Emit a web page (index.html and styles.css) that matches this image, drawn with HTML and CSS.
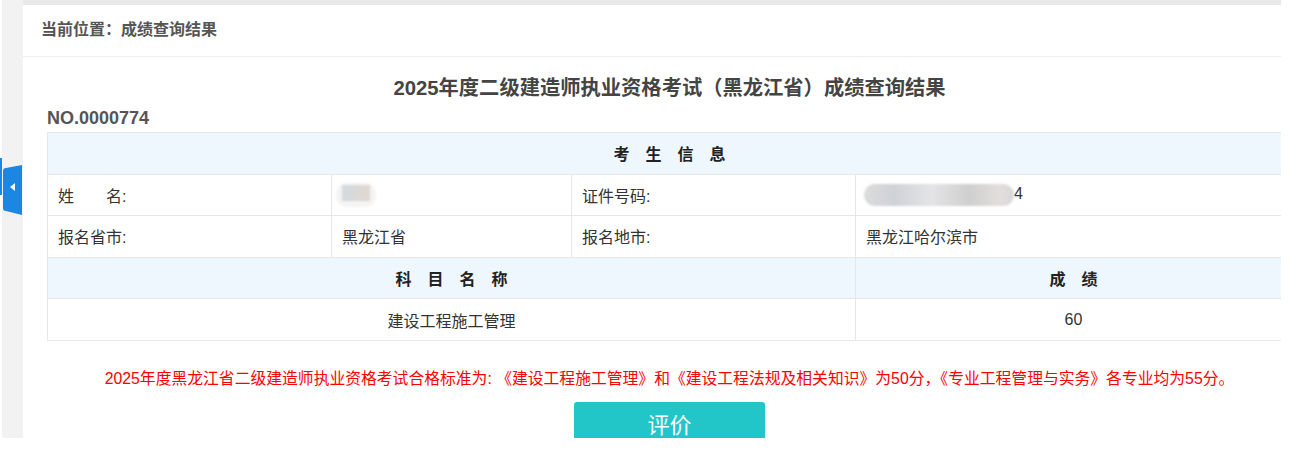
FILE: index.html
```html
<!DOCTYPE html>
<html lang="zh-CN">
<head>
    <meta charset="UTF-8">
    <title>成绩查询结果</title>
    <link rel="stylesheet" href="styles.css">
</head>
<body>
    <div class="frame">
        <div class="side">
            <span class="side-line"></span>
            <svg class="side-tab" width="19" height="50" viewBox="0 0 19 50">
                <path d="M0,6 Q0,3 3,3 L19,0 L19,50 L3,46 Q0,46 0,43 Z" fill="#1c86e3"/>
                <path d="M7,22 L12,18 L12,26 Z" fill="#ffffff"/>
            </svg>
        </div>
        <div class="main">
            <div class="crumb">当前位置：成绩查询结果</div>
            <div class="content">
                <h3 class="title">2025年度二级建造师执业资格考试（黑龙江省）成绩查询结果</h3>
                <div class="serial">NO.0000774</div>
                <table class="result">
                    <colgroup>
                        <col style="width: 284px">
                        <col style="width: 240px">
                        <col style="width: 284px">
                        <col>
                    </colgroup>
                    <tr class="head">
                        <td colspan="4"><span class="spaced">考生信息</span></td>
                    </tr>
                    <tr>
                        <td>姓<span class="gap"></span>名:</td>
                        <td><span class="blur blur-name"><i></i><i></i></span></td>
                        <td>证件号码:</td>
                        <td><span class="blur blur-id"></span>4</td>
                    </tr>
                    <tr>
                        <td>报名省市:</td>
                        <td>黑龙江省</td>
                        <td>报名地市:</td>
                        <td>黑龙江哈尔滨市</td>
                    </tr>
                    <tr class="head">
                        <td colspan="3"><span class="spaced">科目名称</span></td>
                        <td><span class="spaced">成绩</span></td>
                    </tr>
                    <tr class="center">
                        <td colspan="3">建设工程施工管理</td>
                        <td>60</td>
                    </tr>
                </table>
                <p class="note">2025年度黑龙江省二级建造师执业资格考试合格标准为: 《建设工程施工管理》和《建设工程法规及相关知识》为50分，《专业工程管理与实务》各专业均为55分。</p>
                <div class="actions">
                    <button class="btn">评价</button>
                </div>
            </div>
        </div>
    </div>
</body>
</html>
```
FILE: styles.css
```css
body {
    margin: 0;
    background-color: #ffffff;
    font-family: 'Liberation Sans', 'Noto Sans CJK SC', sans-serif;
    color: #333333;
}

.frame {
    display: flex;
    height: 438px;
    overflow: hidden;
}

.side {
    position: relative;
    width: 21px;
    margin-left: 2px;
    flex-shrink: 0;
    background-color: #f2f2f2;
}

.side-line {
    position: absolute;
    left: -2px;
    top: 158px;
    width: 2px;
    height: 37px;
    background-color: #1c86e3;
}

.side-tab {
    position: absolute;
    left: 1px;
    top: 165px;
}

.main {
    width: 1258px;
    flex-shrink: 0;
    overflow: hidden;
    border-top: 5px solid #e9e9e9;
    background-color: #ffffff;
}

.crumb {
    height: 51px;
    line-height: 50px;
    padding-left: 18px;
    font-size: 16px;
    font-weight: bold;
    color: #555555;
    border-bottom: 1px solid #eeeeee;
}

.content {
    width: 1245px;
    padding: 0 24px;
}

.title {
    margin: 16px 0 0;
    line-height: 30px;
    font-size: 20.3px;
    font-weight: bold;
    color: #444444;
    text-align: center;
}

.serial {
    margin-top: 5px;
    line-height: 20px;
    font-size: 18px;
    font-weight: bold;
    color: #555555;
}

.result {
    width: 1245px;
    margin-top: 4px;
    border-collapse: collapse;
    table-layout: fixed;
    font-size: 16px;
}

.result td {
    height: 40.6px;
    padding: 0 10px;
    border: 1px solid #e7e7e7;
    color: #333333;
}

.result .head td {
    background-color: #eef6fe;
    text-align: center;
    font-weight: bold;
    color: #222222;
}

.result .center td {
    text-align: center;
}

.spaced {
    letter-spacing: 16px;
    padding-left: 16px;
}

.gap {
    display: inline-block;
    width: 32px;
}

.blur {
    display: inline-block;
    vertical-align: middle;
    filter: blur(1px);
}

.blur-name {
    margin-left: -6px;
    padding: 2px 6px;
    border-radius: 10px;
    background-color: #f4f4f4;
}

.blur-name i {
    display: inline-block;
    width: 14px;
    height: 16px;
    background-color: #d6d9dc;
}

.blur-name i + i {
    background-color: #ddd8d4;
}

.blur-id {
    width: 150px;
    height: 22px;
    margin-left: -2px;
    border-radius: 11px;
    background: linear-gradient(90deg, #dcdcdc, #cfd2d6 20%, #e4e4e6 45%, #cfcfcf 70%, #e2dedc 90%, #d8d8d8);
}

.note {
    margin: 26px 0 0;
    line-height: 24px;
    font-size: 15.8px;
    color: #ff0000;
    text-align: center;
}

.actions {
    margin-top: 11px;
    text-align: center;
}

.btn {
    width: 191px;
    height: 48px;
    padding: 0;
    border: none;
    border-radius: 3px;
    background-color: #23c6c8;
    color: #ffffff;
    font-family: 'Liberation Sans', 'Noto Sans CJK SC', sans-serif;
    font-size: 22px;
    line-height: 48px;
}
```
